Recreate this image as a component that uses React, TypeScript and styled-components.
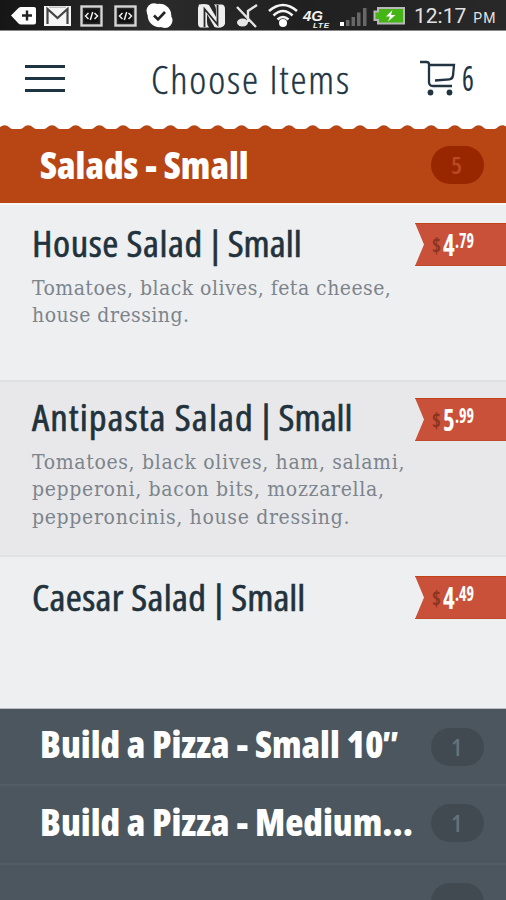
import React from 'react';
import styled, { createGlobalStyle } from 'styled-components';

const GlobalStyle = createGlobalStyle`
  * { box-sizing: border-box; }
  body { margin: 0; background: #4b565e; }
`;

const Screen = styled.div`
  width: 506px;
  height: 900px;
  overflow: hidden;
  display: flex;
  flex-direction: column;
  font-family: 'Open Sans', sans-serif;
  font-stretch: 75%;
  background: #4b565e;
`;

const StatusBar = styled.div`
  flex: none;
  height: 31px;
  display: flex;
  align-items: flex-start;
  background: linear-gradient(100deg, #161616, #2b2b2b 30%, #202020 60%, #292929);
  border-bottom: 1px solid #8b8688;
`;

const StatusIcon = styled.svg<{ $gap: number }>`
  flex: none;
  display: block;
  height: 30px;
  margin-left: ${(p) => p.$gap}px;
`;

const Network = styled.div`
  flex: none;
  width: 30px;
  height: 30px;
  margin-left: 5px;
  padding-top: 9px;
  display: flex;
  flex-direction: column;
  font-family: 'Liberation Sans', sans-serif;
  font-style: italic;
  font-weight: 700;
  color: #f2f2f2;
`;

const Generation = styled.span`
  height: 13px;
  font-size: 15px;
  line-height: 13px;
`;

const Standard = styled.span`
  height: 7px;
  margin-left: 10px;
  font-size: 8px;
  line-height: 7px;
  letter-spacing: 0.8px;
`;

const Clock = styled.div`
  display: flex;
  align-items: baseline;
  margin-left: 8px;
  font-family: Roboto, sans-serif;
  font-stretch: 100%;
  font-size: 21px;
  line-height: 33px;
  height: 30px;
  color: #e2e2e2;
  white-space: nowrap;
`;

const Meridiem = styled.span`
  margin-left: 7px;
  font-size: 14px;
  letter-spacing: 1px;
`;

const Header = styled.header`
  flex: none;
  height: 94px;
  display: grid;
  grid-template-columns: 151px 1fr 86px;
  align-items: center;
  background: #fff;
  color: #203442;
`;

const MenuButton = styled.button`
  width: 40px;
  height: 27px;
  margin: 1px 0 0 25px;
  padding: 0;
  border: 0;
  background: none;
  display: flex;
  flex-direction: column;
  justify-content: space-between;
`;

const MenuLine = styled.span`
  height: 3px;
  background: #1f3443;
`;

const PageTitle = styled.h1`
  margin: 1px 0 0;
  font-size: 38px;
  line-height: 50px;
  font-weight: 300;
  letter-spacing: 1.75px;
  white-space: nowrap;
  -webkit-text-stroke: 0.35px currentColor;
  transform: scaleX(1.068);
  transform-origin: left;
`;

const Cart = styled.div`
  display: flex;
  align-items: center;
  height: 40px;
`;

const CartCount = styled.span`
  margin-left: 6px;
  font-size: 34px;
  line-height: 40px;
  font-weight: 500;
  transform: scaleX(0.82);
  transform-origin: left;
`;

const Scallop = styled.svg`
  flex: none;
  display: block;
  width: 506px;
  height: 5px;
  background: #b84614;
`;

const SectionBar = styled.div<{ $tone: 'open' | 'closed'; $height: number; $lift: number }>`
  flex: none;
  height: ${(p) => p.$height}px;
  padding: 0 22px ${(p) => p.$lift}px 40px;
  display: flex;
  align-items: center;
  justify-content: space-between;
  background: ${(p) => (p.$tone === 'open' ? '#b84614' : '#4b565e')};
  border-bottom: 2px solid ${(p) => (p.$tone === 'open' ? '#f8f5f2' : '#525e66')};
`;

const SectionName = styled.h2<{ $raise: number }>`
  margin: 0 0 ${(p) => p.$raise}px;
  font-size: 36.5px;
  line-height: 50px;
  font-weight: 800;
  color: #fff;
  white-space: nowrap;
  transform: scaleX(1.027);
  transform-origin: left;
`;

const InchMark = styled.span`
  display: inline-block;
  margin-left: -3px;
  font-weight: 700;
  transform: skewX(-8deg);
`;

const CountBadge = styled.span<{ $tone: 'open' | 'closed' }>`
  flex: none;
  width: 53px;
  height: 38px;
  margin-top: 1px;
  border-radius: 19px;
  display: flex;
  align-items: center;
  justify-content: center;
  padding: 0 2px 2px 0;
  font-size: 24px;
  font-weight: 600;
  background: ${(p) => (p.$tone === 'open' ? '#982700' : '#414a50')};
  color: ${(p) => (p.$tone === 'open' ? '#b84b20' : '#66717a')};
`;

const Item = styled.article<{ $height: number; $shade: string }>`
  flex: none;
  height: ${(p) => p.$height}px;
  padding-left: 32px;
  display: flex;
  justify-content: space-between;
  align-items: flex-start;
  background: ${(p) => p.$shade};
  border-bottom: 2px solid #dfe1e3;
  &:last-of-type { border-bottom: 1px solid #b9bec2; }
`;

const ItemText = styled.div<{ $top: number }>`
  padding-top: ${(p) => p.$top}px;
  white-space: nowrap;
`;

const ItemTitle = styled.h3`
  margin: 0;
  font-size: 37px;
  line-height: 40px;
  font-weight: 400;
  color: #22323c;
  -webkit-text-stroke: 0.6px currentColor;
  transform: scaleX(1.05);
  transform-origin: left;
`;

const ItemName = styled.span<{ $spacing: number }>`
  letter-spacing: ${(p) => p.$spacing}px;
`;

const Divider = styled.span`
  margin: 0 -2.5px;
`;

const Description = styled.p<{ $spacing: number }>`
  margin: 11.5px 0 0;
  font-family: 'DejaVu Serif', serif;
  font-stretch: condensed;
  font-size: 21px;
  line-height: 27.6px;
  letter-spacing: ${(p) => p.$spacing}px;
  color: #7c848c;
  white-space: pre-line;
`;

const PriceTag = styled.div<{ $top: number }>`
  flex: none;
  width: 91px;
  height: 43px;
  margin-top: ${(p) => p.$top}px;
  padding-left: 17px;
  display: flex;
  align-items: flex-start;
  background: #ca5139;
  border-top: 1px solid #c44219;
  border-bottom: 1px solid #bf4a2c;
  clip-path: polygon(0 0, 100% 0, 100% 100%, 0 100%, 9px 50%);
  color: #fff;
  font-weight: 700;
`;

const Currency = styled.span`
  width: 11px;
  font-size: 22px;
  line-height: 41px;
  color: #8a3522;
  transform: scaleX(0.85);
  transform-origin: left;
`;

const Dollars = styled.span`
  width: 12px;
  font-size: 31px;
  line-height: 40px;
  transform: scaleX(0.8);
  transform-origin: left;
`;

const Cents = styled.span`
  font-size: 21px;
  line-height: 32px;
  transform: scaleX(0.76);
  transform-origin: left;
`;

const WAVE = 23.7;
const wavePath = () => {
  let d = 'M-20 0V4';
  for (let i = -1; i < 22; i += 1) {
    const peak = 4.6 + i * WAVE;
    d += `L${peak - 8} 4C${peak - 4.5} 3.6 ${peak - 4} 0.3 ${peak} 0.3S${peak + 4.5} 3.6 ${peak + 8} 4`;
  }
  return `${d}V0Z`;
};

const CodeIcon = ({ gap }: { gap: number }) => (
  <StatusIcon $gap={gap} width="23" viewBox="0 0 23 30" fill="none">
    <rect x="1.5" y="6.5" width="20" height="19" stroke="#d5d5d5" strokeWidth="2.4" />
    <rect x="4.5" y="9.5" width="14" height="13" fill="#111" />
    <path d="M8.5 13L5.5 16L8.5 19M14.5 13L17.5 16L14.5 19M12.7 12L10.3 20" stroke="#eee" strokeWidth="1.5" />
  </StatusIcon>
);

const StatusIcons = () => (
  <>
    <StatusIcon $gap={11} width="25" viewBox="0 0 25 30">
      <path d="M0 15.5L7.5 8Q8.5 7 10 7H23Q25 7 25 9V22.5Q25 24.5 23 24.5H10Q8.5 24.5 7.5 23.5Z" fill="#fff" />
      <path d="M16 10.5V20.5M11 15.5H21" stroke="#222" strokeWidth="2.4" />
    </StatusIcon>
    <StatusIcon $gap={8} width="27" viewBox="0 0 27 30">
      <rect y="6" width="27" height="20" fill="#f5f5f5" />
      <path d="M3.5 24V9L13.5 18L23.5 9V24" fill="none" stroke="#444" strokeWidth="2.2" />
      <path d="M5 7.2H22" stroke="#aaa" strokeWidth="1" />
    </StatusIcon>
    <CodeIcon gap={9} />
    <CodeIcon gap={11} />
    <StatusIcon $gap={9} width="27" viewBox="0 0 27 30">
      <circle cx="13.5" cy="15.5" r="11.8" fill="#fff" />
      <circle cx="8" cy="10.8" r="7.5" fill="#fff" />
      <circle cx="19" cy="20.5" r="7.5" fill="#fff" />
      <path d="M8 15.5L12 19.5L19 12" fill="none" stroke="#222" strokeWidth="2.6" />
    </StatusIcon>
    <StatusIcon $gap={24} width="29" viewBox="0 0 29 30">
      <path d="M2 4.5Q8 3.5 12 5L19 17V11Q19 6 17 4.5H25Q28 5 28 9V24Q27 27 24 27.5Q20 28 17.5 27L10 14V22Q10 26 12 27.5H3Q1 27 1 24V8Z" fill="#eee" />
      <path d="M7.5 27V9L20.5 24.5V5" fill="none" stroke="#2a2a2a" strokeWidth="1.8" />
    </StatusIcon>
    <StatusIcon $gap={9} width="24" viewBox="0 0 24 30" fill="none">
      <path d="M2 7L21 27M13 22V11L22 5" stroke="#e6e6e6" strokeWidth="2.4" />
      <ellipse cx="7.5" cy="22.5" rx="5.5" ry="4" fill="#e6e6e6" />
    </StatusIcon>
    <StatusIcon $gap={9} width="30" viewBox="0 0 30 30" fill="none" stroke="#f4f4f4" strokeWidth="2.6">
      <path d="M1 11Q15 -1 29 11M5.5 15.5Q15 6.5 24.5 15.5M9.5 19.5Q15 14.5 20.5 19.5" />
      <circle cx="15" cy="23" r="4" fill="#fff" stroke="none" />
    </StatusIcon>
    <Network>
      <Generation>4G</Generation>
      <Standard>LTE</Standard>
    </Network>
    <StatusIcon $gap={7} width="28" viewBox="0 0 28 30">
      <path d="M0 22H4V26H0Z" fill="#fff" />
      <path d="M6 20H9.5V26H6ZM11.5 17H15V26H11.5ZM17 12.5H20.5V26H17ZM23 8H26.5V26H23Z" fill="#686868" />
    </StatusIcon>
    <StatusIcon $gap={5} width="33" viewBox="0 0 33 30">
      <path d="M5 8H31V23.5H5V20H1.5V11.5H5Z" fill="#45b515" stroke="#b9b9b9" strokeWidth="2" />
      <path d="M19.5 10L13 16.5H17L15 21.5L22.5 15H18Z" fill="#fff" />
    </StatusIcon>
  </>
);

const CartIcon = () => (
  <svg width="36" height="36" viewBox="0 0.5 36 36" fill="none" stroke="#203442" strokeWidth="2.3">
    <path d="M0 2.5H6.5Q9 2.5 9 5V22.5Q9 26.5 13 26.5H32M9 5.5H34L33 16Q32.5 19.5 29.5 19.8L15 21" />
    <circle cx="10.5" cy="33" r="2.9" fill="#203442" stroke="none" />
    <circle cx="29.5" cy="33" r="2.9" fill="#203442" stroke="none" />
  </svg>
);

const Price = ({ dollars, cents, top }: { dollars: string; cents: string; top: number }) => (
  <PriceTag $top={top}>
    <Currency>$</Currency>
    <Dollars>{dollars}</Dollars>
    <Cents>.{cents}</Cents>
  </PriceTag>
);

const items = [
  { name: 'House Salad', size: 'Small', nameSpacing: 0.5, text: 'Tomatoes, black olives, feta cheese,\nhouse dressing.', dollars: '4', cents: '79', height: 177, top: 18, tag: 18, shade: '#eeeff1', spacing: 0.46 },
  { name: 'Antipasta Salad', size: 'Small', nameSpacing: 1, text: 'Tomatoes, black olives, ham, salami,\npepperoni, bacon bits, mozzarella,\npepperoncinis, house dressing.', dollars: '5', cents: '99', height: 175, top: 15, tag: 16, shade: '#e8e8ea', spacing: 0.66 },
  { name: 'Caesar Salad', size: 'Small', nameSpacing: 0.3, text: '', dollars: '4', cents: '49', height: 152, top: 20, tag: 19, shade: '#eeeff1', spacing: 0 },
];

export default function App() {
  return (
    <Screen>
      <GlobalStyle />
      <StatusBar>
        <StatusIcons />
        <Clock>12:17<Meridiem>PM</Meridiem></Clock>
      </StatusBar>
      <Header>
        <MenuButton aria-label="Menu"><MenuLine /><MenuLine /><MenuLine /></MenuButton>
        <PageTitle>Choose Items</PageTitle>
        <Cart><CartIcon /><CartCount>6</CartCount></Cart>
      </Header>
      <Scallop viewBox="0 0 506 5"><path d={wavePath()} fill="#fff" /></Scallop>
      <SectionBar $tone="open" $height={75} $lift={4}>
        <SectionName $raise={0}>Salads - Small</SectionName>
        <CountBadge $tone="open">5</CountBadge>
      </SectionBar>
      {items.map((item) => (
        <Item key={item.name} $height={item.height} $shade={item.shade}>
          <ItemText $top={item.top}>
            <ItemTitle>
              <ItemName $spacing={item.nameSpacing}>{item.name}</ItemName> <Divider>|</Divider> {item.size}
            </ItemTitle>
            {item.text && <Description $spacing={item.spacing}>{item.text}</Description>}
          </ItemText>
          <Price dollars={item.dollars} cents={item.cents} top={item.tag} />
        </Item>
      ))}
      <SectionBar $tone="closed" $height={77} $lift={0}>
        <SectionName $raise={6}>Build a Pizza - Small 10<InchMark>"</InchMark></SectionName>
        <CountBadge $tone="closed">1</CountBadge>
      </SectionBar>
      <SectionBar $tone="closed" $height={79} $lift={4}>
        <SectionName $raise={2}>Build a Pizza - Medium...</SectionName>
        <CountBadge $tone="closed">1</CountBadge>
      </SectionBar>
      <SectionBar $tone="closed" $height={78} $lift={3}>
        <SectionName $raise={2} />
        <CountBadge $tone="closed" />
      </SectionBar>
    </Screen>
  );
}
